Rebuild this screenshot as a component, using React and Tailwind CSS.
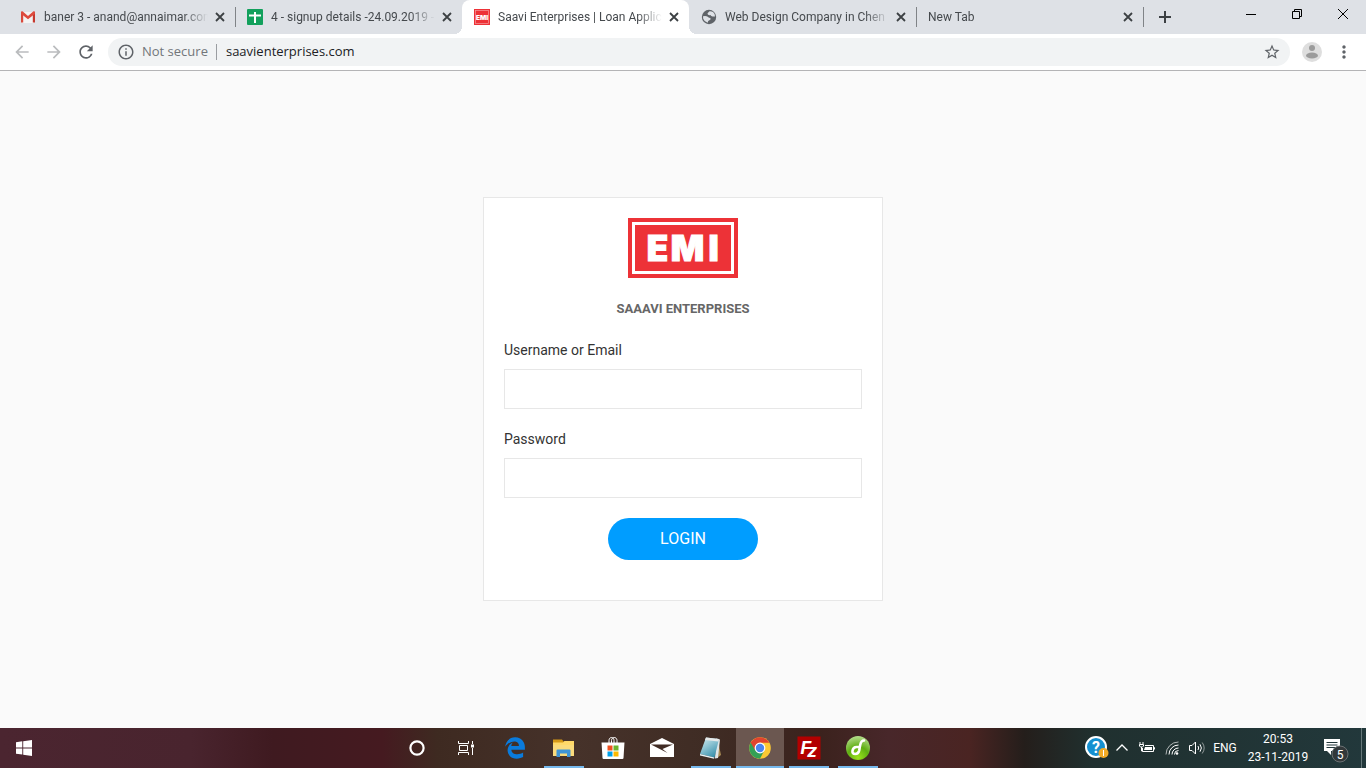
import { FaEdgeLegacy } from "react-icons/fa6";
import { MdStarBorder, MdRefresh, MdInfoOutline, MdArrowBack, MdArrowForward, MdMoreVert } from "react-icons/md";

function GmailIcon() {
  return (
    <svg viewBox="0 0 16 16" className="size-4">
      <path d="M2 3h12v11H2z" fill="#f3f3f3" />
      <path d="M1 13.5V3.6h2.2v9.9z" fill="#d9483b" />
      <path d="M12.8 13.5V3.6H15v9.9z" fill="#c5382e" />
      <path d="M1 3.2C1 2.4 2.1 2 2.8 2.600L8 7l5.200-4.400C13.900 2 15 2.400 15 3.200v1.600L8 10.200 1 4.800z" fill="#dd4b3e" />
    </svg>
  );
}

function SheetsIcon() {
  return (
    <svg viewBox="0 0 16 16" className="size-4">
      <rect width="16" height="16" rx="1" fill="#12a05c" />
      <path d="M7 3h2v2.500h5v2H9V14H7V7.500H2v-2h5z" fill="#fff" />
    </svg>
  );
}

function GlobeIcon() {
  return (
    <svg viewBox="0 0 16 16" className="size-4">
      <circle cx="8" cy="8" r="7.200" fill="#5f6368" />
      <path d="M8.500 2.200L6.800 4q-.8.900.3 1.700 1.200.800 2.300.3.700 1.500 2.300 1.400l2.300.2q.2-3-2-4.600Q10.300 2 8.500 2.200zM2 7.200q3.200-.7 4.700.6 1.200 1.200 2.700 1.300.7 1.700-1 2.200-1.500.3-1.700 2.400-3.400-.8-4.500-4z" fill="#dee1e6" />
    </svg>
  );
}

function EmiLogo({ className }) {
  return (
    <svg viewBox="0 0 110 60" className={className} role="img" aria-label="EMI">
      <rect width="110" height="60" fill="#ed3237" />
      <rect x="5.500" y="5.500" width="99" height="49" fill="none" stroke="#fff" strokeWidth="3" />
      <g fill="#fff" stroke="#fff" strokeWidth="1" fontFamily="Inter, sans-serif" fontWeight="900" fontSize="35" textAnchor="middle">
        <text x="29.500" y="43">E</text>
        <text x="59.500" y="43">M</text>
        <text x="85.500" y="43">I</text>
      </g>
    </svg>
  );
}

function EmiFavicon() {
  return (
    <svg viewBox="0 0 16 16" className="size-4">
      <rect width="16" height="16" fill="#ed3237" />
      <rect x="1.500" y="1.500" width="13" height="13" fill="none" stroke="#fff" strokeOpacity="0.500" strokeWidth="0.700" />
      <text x="8" y="10.600" textAnchor="middle" fill="#fff" fontFamily="Inter, sans-serif" fontWeight="900" fontSize="6.500">EMI</text>
    </svg>
  );
}

function CloseIcon() {
  return (
    <svg viewBox="0 0 16 16" className="size-4" fill="none" stroke="#3c4043" strokeWidth="1.800">
      <path d="M4 4l8 8M12 4l-8 8" />
    </svg>
  );
}

function Tab({ icon, title, active, divider }) {
  return (
    <div className={`relative flex h-full w-[227px] min-w-0 items-center pr-[7px] pl-3 ${active ? "rounded-t-lg bg-white" : ""}`}>
      {active && (
        <>
          <span className="absolute bottom-0 -left-2 size-2 bg-[radial-gradient(circle_at_0_0,transparent_8px,white_8px)]" />
          <span className="absolute -right-2 bottom-0 size-2 bg-[radial-gradient(circle_at_100%_0,transparent_8px,white_8px)]" />
        </>
      )}
      {icon && <span className="mr-2 flex-none">{icon}</span>}
      <span className="min-w-0 flex-1 overflow-hidden text-xs whitespace-nowrap text-[#45494d] mask-r-from-85% mask-r-to-100%">{title}</span>
      <button type="button" aria-label="Close tab" className="ml-1 flex-none">
        <CloseIcon />
      </button>
      {divider && <span className="absolute right-0 h-5 w-px translate-x-full bg-[#808387]" />}
    </div>
  );
}

function TabStrip() {
  return (
    <header className="flex h-[34px] bg-[#dee1e6] pl-2 font-[Roboto,sans-serif]">
      <Tab icon={<GmailIcon />} title="baner 3 - anand@annaimar.com" divider />
      <Tab icon={<SheetsIcon />} title="4 - signup details -24.09.2019 -" />
      <Tab icon={<EmiFavicon />} title="Saavi Enterprises | Loan Applica" active />
      <Tab icon={<GlobeIcon />} title="Web Design Company in Chen" divider />
      <Tab title="New Tab" divider />
      <button type="button" aria-label="New tab" className="ml-2 flex w-7 items-center justify-center">
        <svg viewBox="0 0 12 12" className="size-3" stroke="#3c4043" strokeWidth="2">
          <path d="M6 0v12M0 6h12" />
        </svg>
      </button>
      <div className="ml-auto flex h-7">
        <button type="button" aria-label="Minimize" className="flex w-[46px] items-center justify-center">
          <svg viewBox="0 0 10 10" className="size-[10px]" stroke="#000"><path d="M0 5.500h10" /></svg>
        </button>
        <button type="button" aria-label="Restore" className="flex w-[46px] items-center justify-center">
          <svg viewBox="0 0 10 10" className="size-[10px]" stroke="#000" fill="none"><path d="M.5 2.500h7v7h-7zM2.500 2.500v-2h7v7h-2" /></svg>
        </button>
        <button type="button" aria-label="Close" className="flex w-[46px] items-center justify-center">
          <svg viewBox="0 0 10 10" className="size-[10px]" stroke="#000"><path d="M0 0l10 10M10 0L0 10" /></svg>
        </button>
      </div>
    </header>
  );
}

function Toolbar() {
  return (
    <nav className="flex h-[37px] items-center border-b border-[#b4b4b6] bg-white px-3 font-['Open_Sans',sans-serif] text-[13px] text-[#5f6368]">
      <div className="flex gap-3">
        <button type="button" aria-label="Back"><MdArrowBack className="size-5 text-[#babcbe]" /></button>
        <button type="button" aria-label="Forward"><MdArrowForward className="size-5 text-[#babcbe]" /></button>
        <button type="button" aria-label="Reload"><MdRefresh className="size-5" /></button>
      </div>
      <div className="ml-3 flex h-7 flex-1 items-center rounded-full bg-[#f1f3f4] px-[9px]">
        <button type="button" className="flex items-center gap-1.5 text-[#72767a]">
          <MdInfoOutline className="mr-px size-[18px] text-[#5f6368]" />
          Not secure
        </button>
        <span className="ml-2 h-4 w-px bg-[#9a9da1]" />
        <input type="text" aria-label="Address" defaultValue="saavienterprises.com" className="ml-[9px] min-w-0 flex-1 bg-transparent text-[#202124] outline-none" />
        <button type="button" aria-label="Bookmark this page"><MdStarBorder className="size-[18px]" /></button>
      </div>
      <button type="button" aria-label="Profile" className="ml-3">
        <svg viewBox="0 0 20 20" className="size-5">
          <circle cx="10" cy="10" r="10" fill="#dedede" />
          <circle cx="10" cy="6" r="3" fill="#9b9b9b" />
          <ellipse cx="10" cy="13.500" rx="6" ry="3" fill="#9b9b9b" />
        </svg>
      </button>
      <button type="button" aria-label="Menu" className="ml-3"><MdMoreVert className="size-5" /></button>
    </nav>
  );
}

function LoginCard() {
  const field = "h-10 w-full border border-[#e7e7e7] bg-white px-3 text-sm outline-none";
  const label = "mb-2 block text-sm leading-[21px] text-[#333]";
  return (
    <form className="flex w-full max-w-[400px] flex-col gap-5 border border-[#e7e7e7] bg-white px-5 pt-5 pb-10 font-[Roboto,sans-serif]">
      <EmiLogo className="h-[60px] w-[110px] self-center" />
      <h1 className="text-center text-[13px] leading-[22px] font-bold text-[#666]">SAAAVI ENTERPRISES</h1>
      <div>
        <label htmlFor="username" className={label}>Username or Email</label>
        <input id="username" type="text" className={field} />
      </div>
      <div>
        <label htmlFor="password" className={label}>Password</label>
        <input id="password" type="password" className={field} />
      </div>
      <button type="button" className="h-[42px] w-[150px] self-center rounded-full bg-[#009dff] text-base text-white">LOGIN</button>
    </form>
  );
}

function FolderIcon() {
  return (
    <svg viewBox="0 0 24 24" className="size-6">
      <path d="M1 3.500h9l1.500 2H22v5H1z" fill="#d69a18" />
      <path d="M1 6.500h10l1.500-1.500H22v15H1z" fill="#ffd969" />
      <path d="M1 9h21v11H1z" fill="#fadb7c" />
      <path d="M4.500 21v-6.500q0-1 1-1h12q1 0 1 1V21H15v-3.500H8V21z" fill="#3f95d5" />
    </svg>
  );
}

function StoreIcon() {
  return (
    <svg viewBox="0 0 24 24" className="size-6">
      <path d="M8 8V4.500C8 .5 13 .5 13 4.500V7M10.500 8V4.500C10.500.5 16 .5 16 4.500V7" fill="none" stroke="#fff" />
      <path d="M.5 6.500h23L22.500 22q-.1 1-1 1h-19q-.9 0-1-1z" fill="#fff" />
      <path d="M6.500 9.500h5v5h-5z" fill="#f0501f" />
      <path d="M12.500 9.500h5v5h-5z" fill="#6db52d" />
      <path d="M6.500 15.500h5v5h-5z" fill="#00a0ea" />
      <path d="M12.500 15.500h5v5h-5z" fill="#fdb900" />
    </svg>
  );
}

function MailIcon() {
  return (
    <svg viewBox="0 0 24 24" className="size-6">
      <path d="M0 8L12 2l12 6v13H0z" fill="#fff" />
      <path d="M1 8.500h22L12.500 13l5 4z" fill="#402b24" />
    </svg>
  );
}

function NotepadIcon() {
  return (
    <svg viewBox="0 0 24 24" className="size-6">
      <defs>
        <linearGradient id="note" x1="0" y1="0" x2="0.600" y2="1">
          <stop offset="0" stopColor="#d8eef2" />
          <stop offset="0.500" stopColor="#8cc3d2" />
          <stop offset="1" stopColor="#3e93ad" />
        </linearGradient>
      </defs>
      <path d="M19 5l3 14-4 3z" fill="#a98b55" />
      <path d="M17 2.500l4 1-2 18.500-3 .5z" fill="#dfe5e6" />
      <path d="M7 1.500l13 1.500-4.500 18.500L1 18z" fill="url(#note)" />
      <path d="M7 1.500L20 3l-.6 2.500L6 4z" fill="#e5e8e8" />
      <path d="M1 18l14.500 3.500-.4 1.200L1 19.500z" fill="#e9f4f6" />
    </svg>
  );
}

function ChromeIcon() {
  return (
    <svg viewBox="0 0 24 24" className="size-6">
      <circle cx="12" cy="12" r="10.800" fill="#fcc934" />
      <path d="M12 12L2.650 6.600A10.800 10.800 0 0 0 12 22.800l4.300-8.300z" fill="#34a056" />
      <path d="M2.650 6.600A10.800 10.800 0 0 1 21.350 6.700H12l-4.700 7.700z" fill="#e0442f" />
      <circle cx="12" cy="12" r="5.400" fill="#fff" />
      <circle cx="12" cy="12" r="4.200" fill="#4a85f0" />
    </svg>
  );
}

function FileZillaIcon() {
  return (
    <svg viewBox="0 0 24 24" className="size-6">
      <rect x=".5" y=".5" width="23" height="23" fill="#b30000" />
      <text x="3.500" y="17.500" fill="#fff" fontFamily="Roboto, sans-serif" fontStyle="italic" fontWeight="700" fontSize="19">F</text>
      <text x="10.500" y="21" fill="#fff" fontFamily="Roboto, sans-serif" fontStyle="italic" fontWeight="700" fontSize="19">z</text>
    </svg>
  );
}

function DreamIcon() {
  return (
    <svg viewBox="0 0 24 24" className="size-6">
      <defs>
        <radialGradient id="green" cx="0.500" cy="0.900" r="0.900">
          <stop offset="0" stopColor="#9be21c" />
          <stop offset="0.500" stopColor="#5fae12" />
          <stop offset="1" stopColor="#b5dd8d" />
        </radialGradient>
      </defs>
      <circle cx="12" cy="12" r="12" fill="url(#green)" />
      <path d="M18 4.500q-3 0-3.800 4.500l-1 5.500q-.8 3.500-4 3.500-3.200 0-2.700-3.300.6-3.700 4-3.700h3" fill="none" stroke="#fff" strokeWidth="2.600" strokeLinecap="round" />
    </svg>
  );
}

const apps = [
  { name: "Cortana", icon: <svg viewBox="0 0 16 16" className="size-4"><circle cx="8" cy="8" r="6.600" fill="none" stroke="#fff" strokeWidth="2.200" /></svg> },
  { name: "Task View", icon: <svg viewBox="0 0 16 16" className="size-4" fill="none" stroke="#fff"><path d="M.5 1v2.500h10V1M1.500 5.500h8v5h-8zM.5 15v-2.500h10V15M14.500 1v3M14.500 8v7" /><path d="M13 4.500h3v3h-3z" fill="#fff" stroke="none" /></svg> },
  { name: "Edge", icon: <FaEdgeLegacy className="size-[22px] text-[#0a7bdc]" /> },
  { name: "File Explorer", icon: <FolderIcon />, open: true },
  { name: "Store", icon: <StoreIcon /> },
  { name: "Mail", icon: <MailIcon /> },
  { name: "Notepad", icon: <NotepadIcon />, open: true },
  { name: "Chrome", icon: <ChromeIcon />, active: true },
  { name: "FileZilla", icon: <FileZillaIcon />, open: true },
  { name: "Dreamweaver", icon: <DreamIcon />, open: true },
];

const tray = [
  { name: "Help", icon: <svg viewBox="0 0 24 24" className="size-6"><circle cx="11" cy="11" r="10" fill="#1590d0" stroke="#fff" strokeWidth="2" /><text x="11" y="17" textAnchor="middle" fill="#fff" fontFamily="Roboto, sans-serif" fontWeight="700" fontSize="16">?</text><circle cx="18.500" cy="17" r="5" fill="#f2ab27" /><path d="M18.500 14v6" stroke="#fff" /></svg> },
  { name: "Show hidden icons", icon: <svg viewBox="0 0 16 16" className="size-4" fill="none" stroke="#fff" strokeWidth="1.300"><path d="M2.500 10.500L8 5l5.500 5.500" /></svg> },
  { name: "Battery", icon: <svg viewBox="0 0 16 16" className="size-4" fill="none" stroke="#fff"><path d="M6 5.500h8.500v6H3.500V8M14.500 7.500h1v2M1 2v2.500M4 2v2.500M.5 4.500h4v1.500L3.500 7h-2l-1-1zM2.500 7v4h1" /><path d="M6 7h7v3H5z" fill="#fff" stroke="none" /></svg> },
  { name: "Network", icon: <svg viewBox="0 0 16 16" className="size-4" fill="none" stroke="#fff"><g opacity=".65"><path d="M2 14.500A12.500 12.500 0 0 1 14.500 2" /></g><path d="M5 14.500A9.500 9.500 0 0 1 14.500 5M8 14.500A6.500 6.500 0 0 1 14.500 8" /><path d="M10.500 14.500a4 4 0 0 1 4-4" /><circle cx="13" cy="13.500" r="1.300" fill="#fff" stroke="none" /></svg> },
  { name: "Volume", icon: <svg viewBox="0 0 16 16" className="size-4" fill="none" stroke="#fff"><path d="M.5 5.500H3L6.500 2v12L3 10.500H.5zM9 6q1.300 2 0 4" /><path d="M11 4.300q2.800 3.700 0 7.400" /><path d="M13.200 2.500q4 5.500 0 11" opacity=".5" /></svg> },
];

function Taskbar() {
  return (
    <footer className="flex h-10 items-stretch bg-[linear-gradient(90deg,#4b2530_0%,#49242e_14%,#3f1a20_20%,#451a20_28%,#3e2a21_32%,#46322a_42%,#3f2c24_52%,#3b221d_60%,#48272a_65%,#4a2422_71%,#241e1b_75%,#20302f_80%,#22383b_100%)] font-[Roboto,sans-serif] text-xs text-white">
      <button type="button" aria-label="Start" className="flex w-12 items-center justify-center">
        <svg viewBox="0 0 16 16" className="size-4" fill="#fff"><path d="M0 2.200L6.300 1.300V7.500H0zM7.200 1.200L16 0v7.500H7.200zM0 8.400h6.300v6.200L0 13.800zM7.200 8.400H16V16l-8.800-1.200z" /></svg>
      </button>
      <div className="ml-[345px] flex gap-px">
        {apps.map((app) => (
          <button key={app.name} type="button" aria-label={app.name} className={`relative flex w-12 items-center justify-center ${app.active ? "bg-[#6b5750]" : ""}`}>
            {app.icon}
            {app.open && <span className="absolute inset-x-1 bottom-0 h-0.5 bg-[#76b9ed]" />}
            {app.active && <span className="absolute inset-x-0 bottom-0 h-0.5 bg-[#76b9ed]" />}
          </button>
        ))}
      </div>
      <div className="ml-auto flex">
        {tray.map((item) => (
          <button key={item.name} type="button" aria-label={item.name} className="flex w-[25px] items-center justify-center">{item.icon}</button>
        ))}
        <button type="button" className="w-8 text-center">ENG</button>
        <button type="button" className="flex w-[74px] flex-col items-center justify-center leading-[18px]">
          <span>20:53</span>
          <span>23-11-2019</span>
        </button>
        <button type="button" aria-label="Notifications" className="flex w-[46px] items-center pl-2">
          <svg viewBox="0 0 26 26" className="mt-1 size-[26px]">
            <path d="M1 2h16v12H8v4l-4-4H1z" fill="#fff" />
            <path d="M3.500 5.500h11M3.500 8h11M3.500 10.500h11" stroke="#22373a" />
            <circle cx="17" cy="17" r="8" fill="#32383a" stroke="#6b7173" />
            <text x="17" y="21.500" textAnchor="middle" fill="#fff" fontFamily="Roboto, sans-serif" fontSize="12">5</text>
          </svg>
        </button>
        <button type="button" aria-label="Show desktop" className="w-[5px] border-l border-[#66787a]" />
      </div>
    </footer>
  );
}

export default function App() {
  return (
    <div className="flex min-h-screen flex-col bg-[#fafafa]">
      <TabStrip />
      <Toolbar />
      <main className="flex flex-1 items-center justify-center px-4 pb-0.5">
        <LoginCard />
      </main>
      <Taskbar />
    </div>
  );
}
